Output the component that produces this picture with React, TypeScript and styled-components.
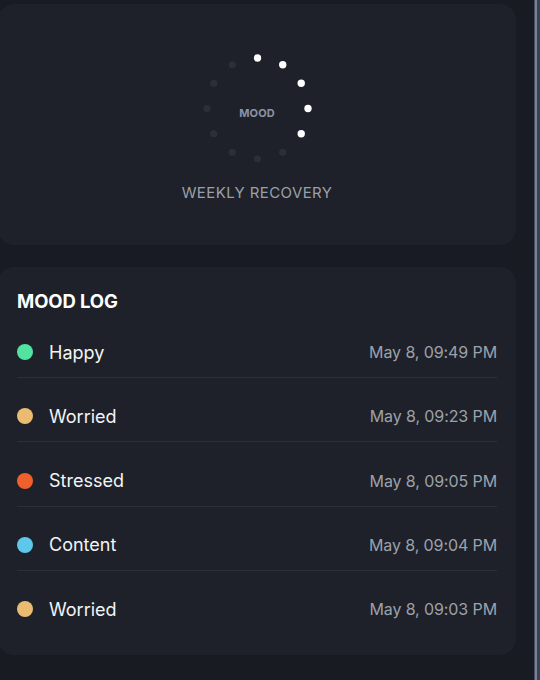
import React from "react";
import styled, { createGlobalStyle } from "styled-components";

const Global = createGlobalStyle`
  html, body {
    margin: 0;
    padding: 0;
    background: #181b21;
    font-family: Inter, "Noto Sans", "Liberation Sans", sans-serif;
    -webkit-font-smoothing: antialiased;
  }
  #root { height: 680px; overflow: hidden; }
`;

const Page = styled.div`
  display: flex;
  width: 540px;
  height: 680px;
  background: #181b21;
`;

const Main = styled.main`
  flex: 1;
  display: flex;
  flex-direction: column;
  gap: 22px;
  padding: 4px 18px 0 0;
  margin-left: -2px;
`;

const Rail = styled.div`
  width: 6px;
  display: flex;
`;

const RailLine = styled.div<{ $c: string; $w: number }>`
  width: ${(p) => p.$w}px;
  background: ${(p) => p.$c};
`;

const Card = styled.section`
  background: #1e2129;
  border-radius: 16px;
`;

const RecoveryCard = styled(Card)`
  height: 241px;
  box-sizing: border-box;
  padding-top: 50px;
  display: flex;
  flex-direction: column;
  align-items: center;
  gap: 20px;
`;

const Ring = styled.div`
  position: relative;
  width: 109px;
  height: 109px;
`;

const RingLabel = styled.span`
  position: absolute;
  left: 0;
  right: 0;
  top: 59px;
  transform: translateY(-50%);
  text-align: center;
  font-size: 11px;
  font-weight: 700;
  color: #8a93a7;
  letter-spacing: 0.1px;
`;

const Caption = styled.div`
  font-size: 15px;
  line-height: 20px;
  color: #9aa0ab;
  letter-spacing: 0.4px;
`;

const LogCard = styled(Card)`
  padding: 24px 19px 21px;
  display: flex;
  flex-direction: column;
  gap: 16px;
`;

const Title = styled.h2`
  margin: 0;
  font-size: 18.5px;
  line-height: 20px;
  font-weight: 700;
  color: #ffffff;
  letter-spacing: -0.1px;
`;

const List = styled.ul`
  list-style: none;
  margin: 0;
  padding: 0;
  display: flex;
  flex-direction: column;
  gap: 13.3px;
`;

const Row = styled.li<{ $last: boolean }>`
  display: flex;
  align-items: center;
  height: 50px;
  border-bottom: ${(p) => (p.$last ? "none" : "1px solid #2b2f37")};
`;

const Dot = styled.span<{ $c: string }>`
  width: 16px;
  height: 16px;
  border-radius: 50%;
  background: ${(p) => p.$c};
  flex: none;
`;

const Mood = styled.span`
  margin-left: 16px;
  font-size: 18px;
  color: #f3f4f6;
  flex: 1;
`;

const Time = styled.span`
  font-size: 16px;
  color: #9ca1ab;
  letter-spacing: -0.1px;
`;

const entries = [
  { mood: "Happy", color: "#52e3a0", time: "May 8, 09:49 PM" },
  { mood: "Worried", color: "#ebbb72", time: "May 8, 09:23 PM" },
  { mood: "Stressed", color: "#f0602c", time: "May 8, 09:05 PM" },
  { mood: "Content", color: "#5ec7ec", time: "May 8, 09:04 PM" },
  { mood: "Worried", color: "#ebbb72", time: "May 8, 09:03 PM" },
];

function DotRing({ lit }: { lit: number }) {
  const dots = Array.from({ length: 12 }, (_, i) => {
    const a = (i * 30 * Math.PI) / 180;
    return {
      x: 54.5 + 50.5 * Math.sin(a),
      y: 54.5 - 50.5 * Math.cos(a),
      on: i < lit,
    };
  });
  return (
    <svg width="109" height="109" viewBox="0 0 109 109">
      {dots.map((d, i) => (
        <circle
          key={i}
          cx={d.x}
          cy={d.y}
          r={d.on ? 3.7 : 3.6}
          fill={d.on ? "#ffffff" : "#2b2f38"}
        />
      ))}
    </svg>
  );
}

export default function App() {
  return (
    <>
      <Global />
      <Page>
        <Main>
          <RecoveryCard>
            <Ring>
              <DotRing lit={5} />
              <RingLabel>MOOD</RingLabel>
            </Ring>
            <Caption>WEEKLY RECOVERY</Caption>
          </RecoveryCard>
          <LogCard>
            <Title>MOOD LOG</Title>
            <List>
              {entries.map((e, i) => (
                <Row key={i} $last={i === entries.length - 1}>
                  <Dot $c={e.color} />
                  <Mood>{e.mood}</Mood>
                  <Time>{e.time}</Time>
                </Row>
              ))}
            </List>
          </LogCard>
        </Main>
        <Rail>
          <RailLine $c="#4a5063" $w={1} />
          <RailLine $c="#7c8296" $w={2} />
          <RailLine $c="#3b4155" $w={3} />
        </Rail>
      </Page>
    </>
  );
}
